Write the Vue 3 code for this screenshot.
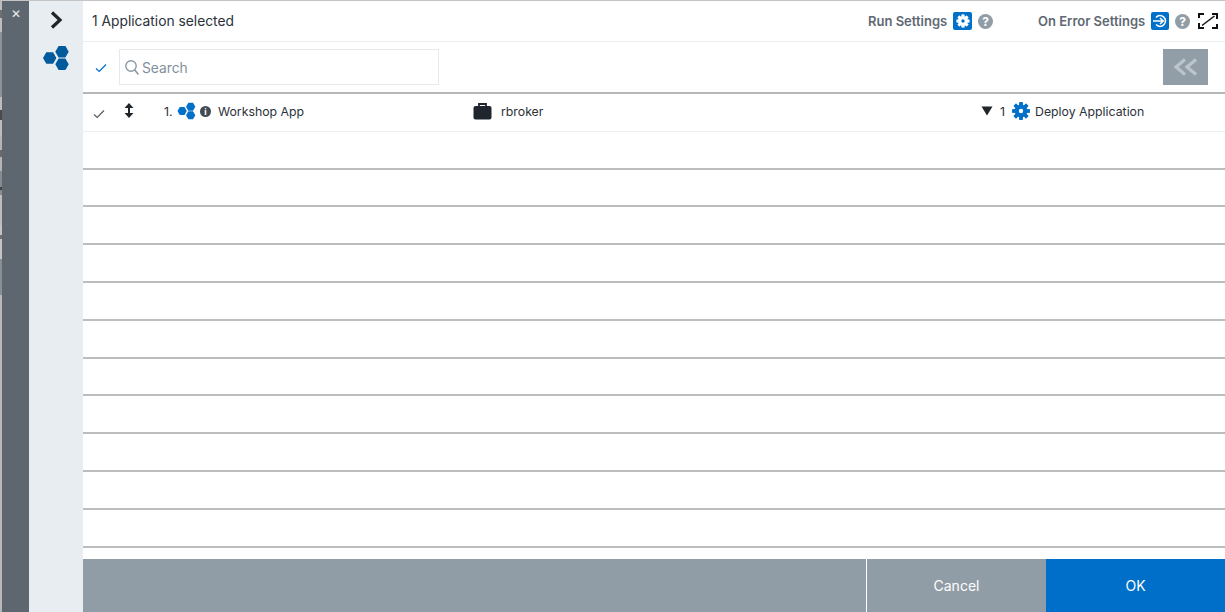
<script setup>
const emptyRows = Array.from({ length: 11 }, (_, i) => i)
const teeth = [0, 45, 90, 135, 180, 225, 270, 315]
const strip = [
  { h: 10, c: '#bdbdbd' }, { h: 8, c: '#6f6f6f' }, { h: 14, c: '#bdbdbd' }, { h: 65, c: '#8e9296' },
  { h: 13, c: '#bdbdbd' }, { h: 10, c: '#4a4a4a' }, { h: 16, c: '#bdbdbd' }, { h: 14, c: '#b4b4b4' },
  { h: 7, c: '#6a6a6a' }, { h: 14, c: '#b4b4b4' }, { h: 16, c: '#888c90' }, { h: 3, c: '#444444' },
  { h: 5, c: '#888c90' }, { h: 30, c: '#bdbdbd' }, { h: 10, c: '#c4c4c4' }, { h: 4, c: '#6f6f6f' },
  { h: 20, c: '#c4c4c4' }, { h: 36, c: '#8a8f94' }, { h: 317, c: '#b8b8b8' }
]
</script>

<template>
  <div class="page">
    <div class="strip">
      <div v-for="(s, i) in strip" :key="i" :style="{ height: s.h + 'px', background: s.c }"></div>
    </div>
    <div class="close-rail"><span class="close">✕</span></div>
    <aside class="side">
      <svg class="side-chevron" width="14" height="20" viewBox="0 0 14 20">
        <path d="M3 2.500l8 7.500-8 7.500" fill="none" stroke="#1f2429" stroke-width="3.200"/>
      </svg>
      <svg class="side-hex" width="28" height="26" viewBox="0 0 28 26">
        <g fill="#005a9c">
          <polygon points="1,13 4.300,7.200 11.100,7.200 14.400,13 11.100,18.800 4.300,18.800"/>
          <polygon points="13.300,6.800 16.600,1 23.400,1 26.700,6.800 23.400,12.600 16.600,12.600"/>
          <polygon points="13.300,19.200 16.600,13.400 23.400,13.400 26.700,19.200 23.400,25 16.600,25"/>
        </g>
      </svg>
    </aside>
    <main class="main">
      <header class="top">
        <span class="selected">1 Application selected</span>
        <span class="setting run">
          <b>Run Settings</b>
          <span class="blue-box">
            <svg width="14" height="14" viewBox="0 0 14 14">
              <rect v-for="t in teeth" :key="t" x="5.600" y="0.600" width="2.800" height="12.800" fill="#fff" :transform="`rotate(${t} 7 7)`"/>
              <circle cx="7" cy="7" r="4.800" fill="#fff"/>
              <circle cx="7" cy="7" r="1.700" fill="#0070c9"/>
            </svg>
          </span>
          <span class="help">?</span>
        </span>
        <span class="setting err">
          <b>On Error Settings</b>
          <span class="blue-box narrow">
            <svg width="16" height="14" viewBox="0 0 16 14">
              <path d="M4 3.400A5.400 5.400 0 1 1 4 10.600" fill="none" stroke="#fff" stroke-width="1.500"/>
              <path d="M1 7h10M8 4l3.200 3L8 10" fill="none" stroke="#fff" stroke-width="1.600"/>
            </svg>
          </span>
          <span class="help">?</span>
        </span>
        <svg class="expand" width="20" height="16" viewBox="0 0 20 16">
          <path d="M1 5V1h5M14 1h5v5M1 10v5h5M14 15h5v-4" fill="none" stroke="#111" stroke-width="2"/>
          <path d="M4 12.500L16.500 3" fill="none" stroke="#111" stroke-width="1.500"/>
        </svg>
      </header>
      <div class="search-row">
        <svg class="tick blue" width="12" height="10" viewBox="0 0 12 10">
          <path d="M1 5.500l3.200 3L11 1.500" fill="none" stroke="#0070c9" stroke-width="1.200"/>
        </svg>
        <label class="search">
          <svg width="16" height="17" viewBox="0 0 16 17">
            <circle cx="7" cy="7" r="5.200" fill="none" stroke="#8b98a3" stroke-width="1.400"/>
            <path d="M10.800 11l3.600 4.400" stroke="#8b98a3" stroke-width="1.600"/>
          </svg>
          <span class="placeholder">Search</span>
        </label>
        <button class="collapse">
          <svg width="26" height="18" viewBox="0 0 26 18">
            <path d="M12 1.500L3 9l9 7.500M23 1.500L14 9l9 7.500" fill="none" stroke="#bcc5cc" stroke-width="3.200"/>
          </svg>
        </button>
      </div>
      <div class="rows">
        <div class="row first">
          <svg class="tick" width="12" height="10" viewBox="0 0 12 10">
            <path d="M1 5.500l3.200 3L11 1.500" fill="none" stroke="#555c63" stroke-width="1.200"/>
          </svg>
          <svg class="updown" width="10" height="15" viewBox="0 0 10 15">
            <path d="M5 2v11" stroke="#20252a" stroke-width="2"/>
            <path d="M5 0l4.500 5H.5zM5 15l4.500-5H.5z" fill="#20252a"/>
          </svg>
          <span class="cell-name">
            <span class="index">1.</span>
            <svg class="row-hex" width="20" height="18" viewBox="0 0 28 26">
              <g fill="#0070c9">
                <polygon points="0.300,13 3.600,7.200 10.400,7.200 13.700,13 10.400,18.800 3.600,18.800"/>
                <polygon points="12.600,6.800 15.900,1 22.700,1 26,6.800 22.700,12.600 15.900,12.600"/>
                <polygon points="12.600,19.200 15.900,13.400 22.700,13.400 26,19.200 22.700,25 15.900,25"/>
              </g>
            </svg>
            <span class="info">i</span>
            <span class="name">Workshop App</span>
          </span>
          <span class="cell-owner">
            <svg width="19" height="18" viewBox="0 0 19 18">
              <path d="M6 4V2h7v2" fill="none" stroke="#1f262e" stroke-width="1.800"/>
              <rect x="0.500" y="4" width="18" height="13.500" rx="2" fill="#1f262e"/>
            </svg>
            <span>rbroker</span>
          </span>
          <span class="cell-task">
            <svg width="12" height="10" viewBox="0 0 12 10"><path d="M0.500 0.500h11L6 9.500z" fill="#20252a"/></svg>
            <span class="count">1</span>
            <svg class="gear" width="18" height="18" viewBox="0 0 18 18">
              <rect v-for="t in teeth" :key="t" x="7.300" y="0.200" width="3.400" height="17.600" fill="#0070c9" :transform="`rotate(${t} 9 9)`"/>
              <circle cx="9" cy="9" r="6.400" fill="#0070c9"/>
              <circle cx="9" cy="9" r="2.200" fill="#fff"/>
            </svg>
            <span>Deploy Application</span>
          </span>
        </div>
        <div v-for="r in emptyRows" :key="r" class="row"></div>
      </div>
      <footer class="foot">
        <div class="foot-fill"></div>
        <button class="cancel">Cancel</button>
        <button class="ok">OK</button>
      </footer>
    </main>
  </div>
</template>

<style scoped>
.page {
  display: flex;
  width: 1225px;
  height: 612px;
  overflow: hidden;
  font-family: Inter, "Liberation Sans", sans-serif;
  color: #2b3138;
  background: #fff;
}
.strip { width: 2px; flex: none; }
.close-rail {
  width: 27px;
  flex: none;
  background: #5e6770;
  border-top: 1px solid #c4c4c4;
  text-align: center;
}
.close { display: block; margin-top: 5px; color: #e8edf1; font-size: 12px; line-height: 16px; }
.side {
  width: 54px;
  flex: none;
  background: #e8edf1;
  border-top: 1px solid #c4c4c4;
  display: flex;
  flex-direction: column;
  align-items: center;
}
.side-chevron { margin-top: 9px; }
.side-hex { margin-top: 15px; }
.main { flex: 1; display: flex; flex-direction: column; min-width: 0; }
.top {
  height: 42px;
  box-sizing: border-box;
  flex: none;
  border-top: 1px solid #c4c4c4;
  border-bottom: 1px solid #ebeef0;
  display: flex;
  align-items: center;
  padding-left: 9px;
}
.selected { font-size: 13.800px; width: 776px; }
.setting { display: flex; align-items: center; font-size: 13px; color: #5e6973; }
.setting b { font-weight: 600; }
.run { width: 170px; }
.blue-box {
  width: 19px;
  height: 18px;
  margin-left: 6px;
  border-radius: 2px;
  background: #0070c9;
  display: flex;
  align-items: center;
  justify-content: center;
}
.blue-box.narrow { width: 18px; margin-left: 6px; }
.help {
  width: 15px;
  height: 15px;
  margin-left: 6px;
  border-radius: 50%;
  background: #919da6;
  color: #fff;
  font-size: 12px;
  font-weight: 700;
  line-height: 15px;
  text-align: center;
}
.expand { margin-left: 8px; }
.search-row {
  height: 52px;
  box-sizing: border-box;
  flex: none;
  border-bottom: 2px solid #b4b6b8;
  display: flex;
  align-items: center;
  padding-left: 12px;
}
.tick { flex: none; }
.tick.blue { margin-top: 2px; }
.search {
  margin-left: 12px;
  width: 320px;
  height: 36px;
  box-sizing: border-box;
  border: 1px solid #e4e9ed;
  display: flex;
  align-items: center;
  gap: 2px;
  padding-left: 4px;
  font-size: 13.800px;
  color: #83909b;
}
.placeholder { margin-top: 2px; }
.collapse {
  margin-left: 724px;
  width: 45px;
  height: 36px;
  padding: 0;
  border: 0;
  background: #929ea7;
  display: flex;
  align-items: center;
  justify-content: center;
}
.rows { flex: 1; min-height: 0; overflow: hidden; }
.row {
  height: 37.800px;
  box-sizing: border-box;
  border-bottom: 2px solid #bcbdbe;
}
.row.first {
  border-bottom: 1px solid #eceff1;
  display: grid;
  grid-template-columns: 30px 41px 309px 508px 1fr;
  align-items: center;
  padding-left: 10px;
  padding-bottom: 2px;
  font-size: 12.300px;
}
.row.first .tick { margin-top: 5px; }
.updown { margin-left: 1px; margin-top: -2px; }
.cell-name { display: flex; align-items: center; }
.index { width: 13px; }
.info {
  width: 11px;
  height: 11px;
  margin-left: 3px;
  border-radius: 50%;
  background: #424a52;
  color: #fff;
  font-size: 9px;
  font-weight: 700;
  line-height: 11px;
  text-align: center;
}
.name { margin-left: 7px; }
.cell-owner { display: flex; align-items: center; gap: 9px; }
.cell-task { display: flex; align-items: center; }
.count { margin-left: 7px; }
.gear { margin-left: 7px; }
.cell-task > span:last-child { margin-left: 5px; }
.foot { height: 53px; flex: none; display: flex; }
.foot-fill { flex: 1; background: #919da6; }
.foot button {
  width: 179px;
  border: 0;
  padding: 0;
  color: #fff;
  font-family: inherit;
  font-size: 14px;
}
.foot .cancel { background: #919da6; border-left: 1px solid #fff; width: 180px; }
.ok { background: #006fc9; }
</style>
